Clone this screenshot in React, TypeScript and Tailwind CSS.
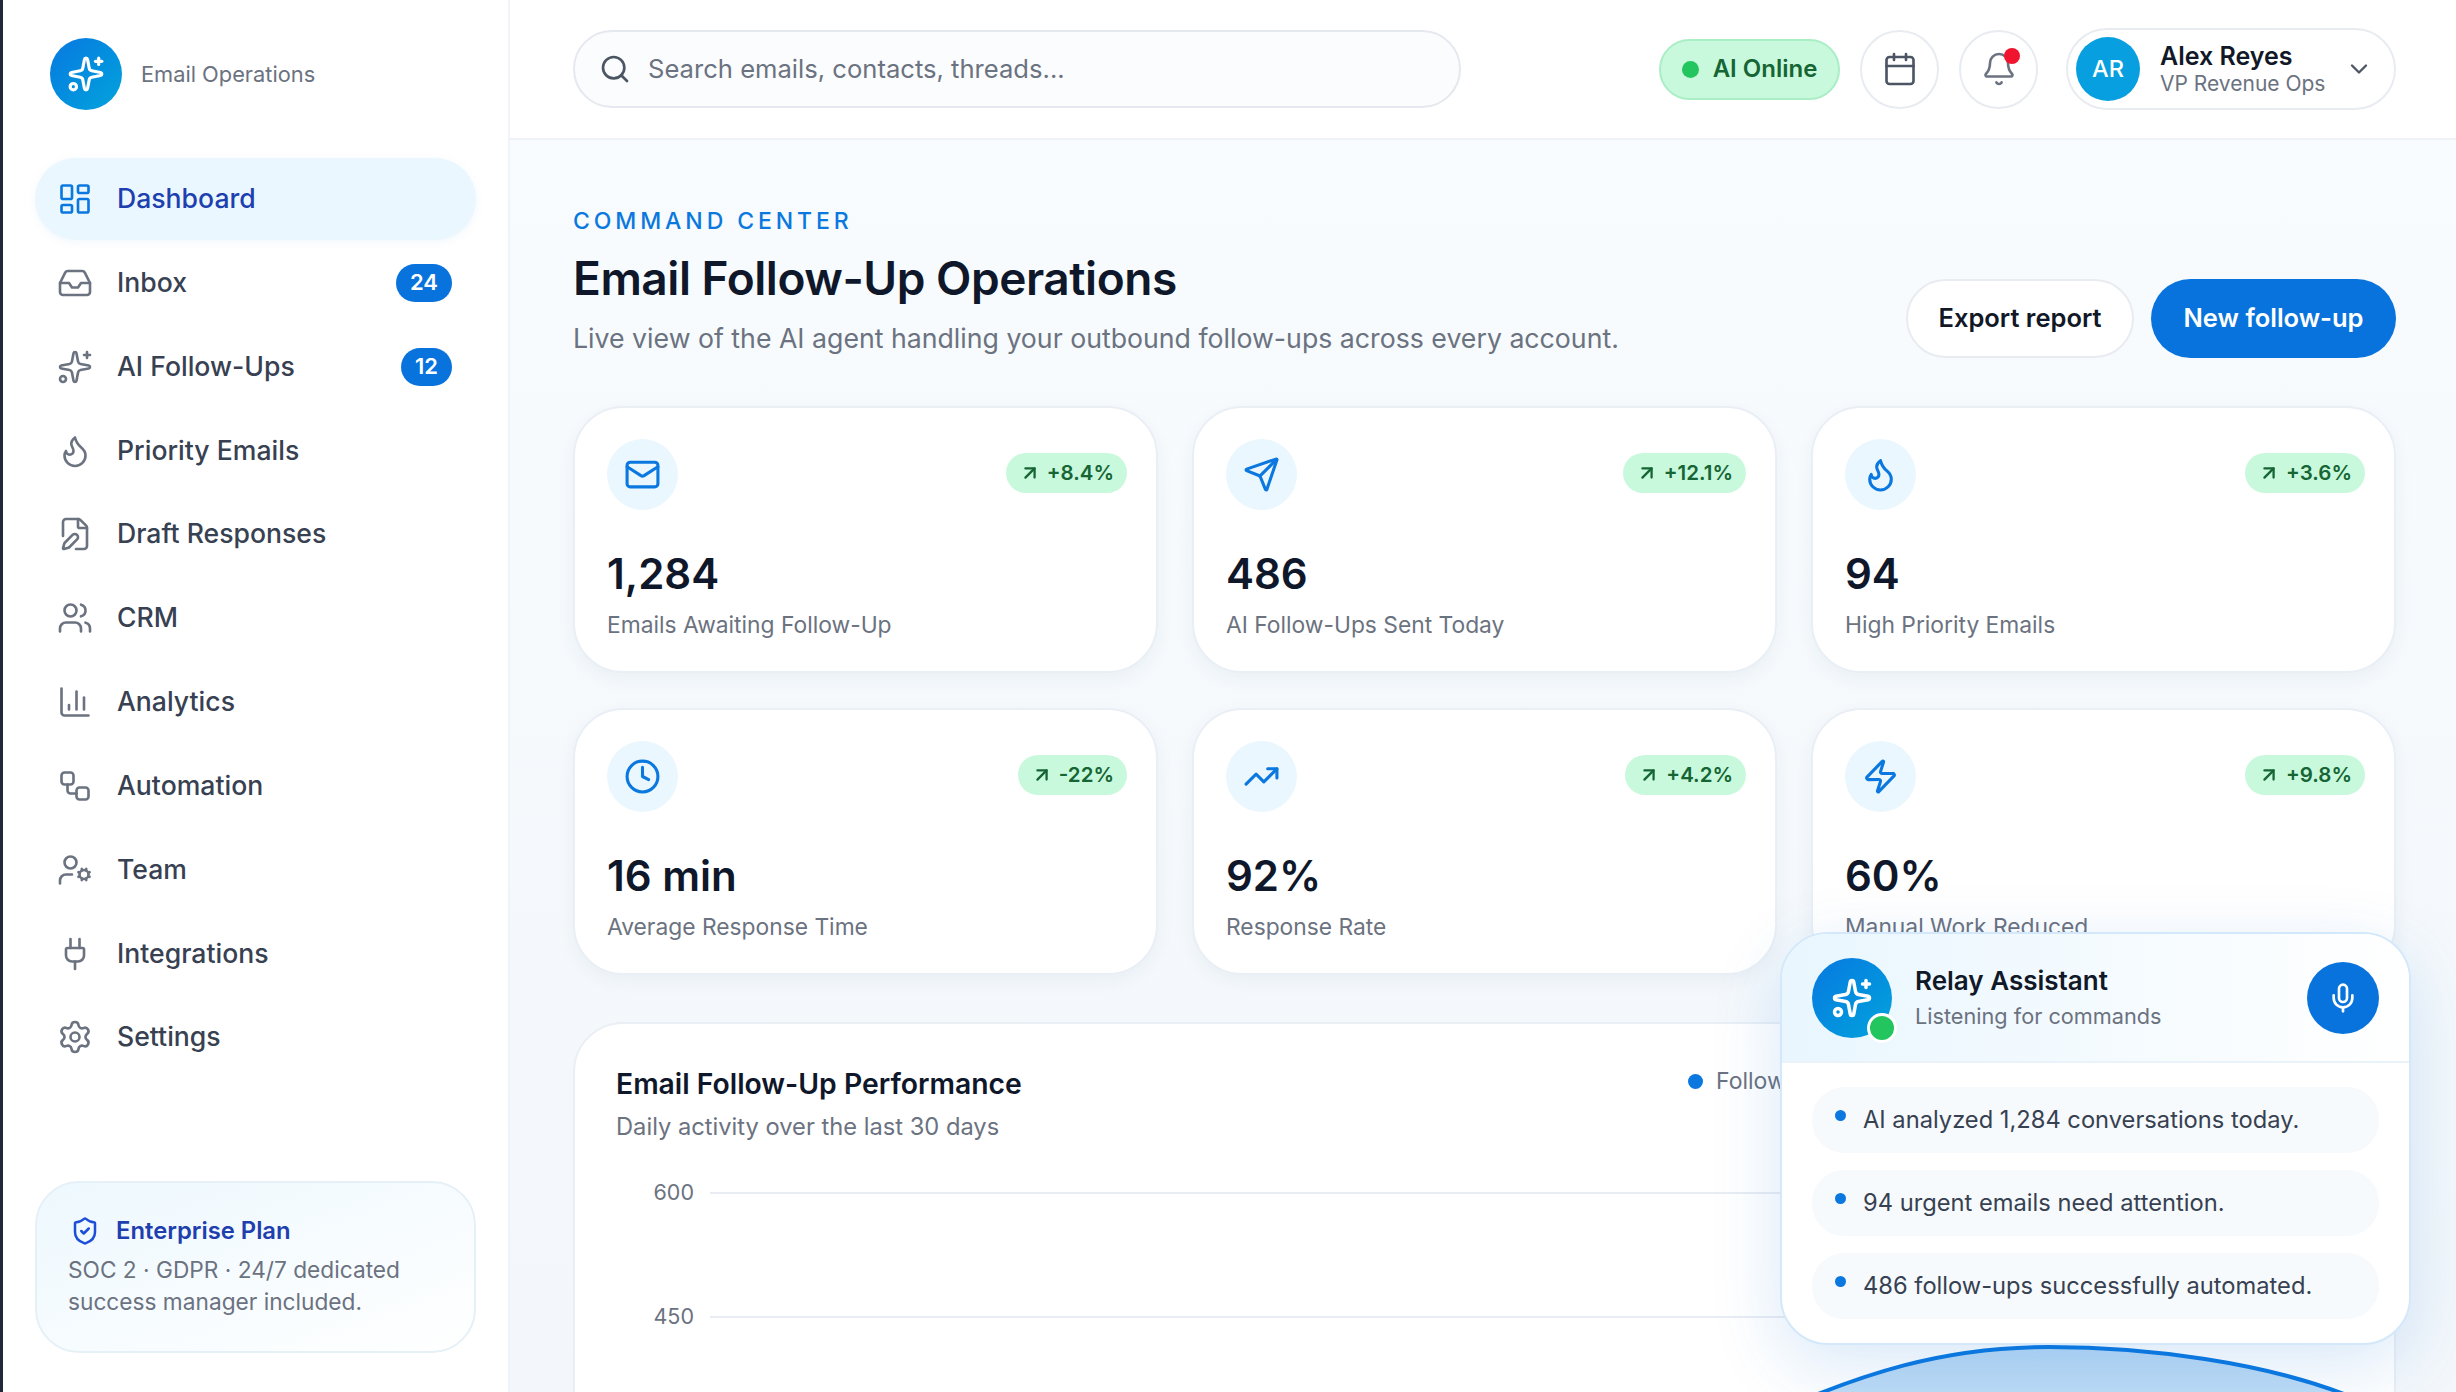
import {
  ArrowUpRight,
  Bell,
  Calendar,
  ChartColumn,
  ChevronDown,
  Clock,
  FilePen,
  Flame,
  Inbox,
  LayoutDashboard,
  Mail,
  Mic,
  Plug,
  Search,
  Send,
  Settings,
  ShieldCheck,
  Sparkles,
  TrendingUp,
  UserCog,
  Users,
  Workflow,
  Zap,
} from 'lucide-react'

const navItems = [
  { label: 'Dashboard', icon: LayoutDashboard, active: true },
  { label: 'Inbox', icon: Inbox, badge: '24' },
  { label: 'AI Follow-Ups', icon: Sparkles, badge: '12' },
  { label: 'Priority Emails', icon: Flame },
  { label: 'Draft Responses', icon: FilePen },
  { label: 'CRM', icon: Users },
  { label: 'Analytics', icon: ChartColumn },
  { label: 'Automation', icon: Workflow },
  { label: 'Team', icon: UserCog },
  { label: 'Integrations', icon: Plug },
  { label: 'Settings', icon: Settings },
]

const stats = [
  { value: '1,284', label: 'Emails Awaiting Follow-Up', delta: '+8.4%', icon: Mail },
  { value: '486', label: 'AI Follow-Ups Sent Today', delta: '+12.1%', icon: Send },
  { value: '94', label: 'High Priority Emails', delta: '+3.6%', icon: Flame },
  { value: '16 min', label: 'Average Response Time', delta: '-22%', icon: Clock },
  { value: '92%', label: 'Response Rate', delta: '+4.2%', icon: TrendingUp },
  { value: '60%', label: 'Manual Work Reduced', delta: '+9.8%', icon: Zap },
]

const assistantNotes = [
  'AI analyzed 1,284 conversations today.',
  '94 urgent emails need attention.',
  '486 follow-ups successfully automated.',
]

function Sidebar() {
  return (
    <aside className="flex w-[507px] shrink-0 flex-col border-r-2 border-[#f0f4f8] bg-white px-[32px]">
      <div className="mt-[38px] flex items-center gap-[19px] pl-[15px]">
        <div className="flex h-[72px] w-[72px] items-center justify-center rounded-full bg-gradient-to-br from-[#0b78e0] to-[#07a3dc] text-white">
          <Sparkles size={38} strokeWidth={2} />
        </div>
        <span className="text-[21.8px] text-[#6b7280]">Email Operations</span>
      </div>

      <nav className="mt-[48px] flex flex-col gap-[1.85px]">
        {navItems.map((item) => (
          <a
            key={item.label}
            className={
              item.active
                ? 'flex h-[82px] items-center rounded-full bg-[#eaf7fe] pl-[22px] pr-[24px] text-[#1e40af] shadow-[0_2px_10px_rgba(14,116,220,0.06)]'
                : 'flex h-[82px] items-center rounded-full pl-[22px] pr-[24px] text-[#374151]'
            }
          >
            <item.icon
              size={36}
              strokeWidth={1.75}
              className={item.active ? 'text-[#0b78e0]' : 'text-[#6b7280]'}
            />
            <span className="ml-[24px] text-[26.6px] font-medium">{item.label}</span>
            {item.badge && (
              <span className="ml-auto flex h-[38px] items-center rounded-full bg-[#0873dc] px-[14px] text-[22px] font-semibold text-white">
                {item.badge}
              </span>
            )}
          </a>
        ))}
      </nav>

      <div className="mb-[39px] mt-auto h-[172px] rounded-[44px] border-2 border-[#e6f0f7] bg-gradient-to-br from-[#edf8fe] to-white px-[31px] pt-[30px]">
        <div className="flex items-center gap-[16px] pl-[2px]">
          <ShieldCheck size={30} strokeWidth={2} className="text-[#1d4ed8]" />
          <span className="text-[23.8px] font-semibold text-[#1e40af]">Enterprise Plan</span>
        </div>
        <p className="mt-[5px] text-[22.7px] leading-[32px] text-[#6b7280]">
          SOC 2 · GDPR · 24/7 dedicated success manager included.
        </p>
      </div>
    </aside>
  )
}

function TopBar() {
  return (
    <header className="flex h-[140px] shrink-0 items-center justify-between border-b-2 border-[#eef2f6] bg-white pl-[63px] pr-[60px]">
      <div className="flex h-[78px] w-[888px] items-center gap-[17px] rounded-full border-2 border-[#e5e9ef] bg-[#fbfcfe] pl-[24px]">
        <Search size={32} strokeWidth={2} className="text-[#4b5563]" />
        <span className="text-[25.6px] text-[#6b7280]">Search emails, contacts, threads...</span>
      </div>
      <div className="flex items-center">
        <div className="flex h-[61px] w-[181px] items-center justify-center gap-[14px] rounded-full border-2 border-[#a9eec5] bg-[#c9f9dd]">
          <span className="h-[17px] w-[17px] rounded-full bg-[#22c55e]" />
          <span className="text-[24px] font-semibold text-[#166534]">AI Online</span>
        </div>
        <button className="ml-[20px] flex h-[79px] w-[79px] items-center justify-center rounded-full border-2 border-[#e8ecf1] bg-white text-[#4b5563]">
          <Calendar size={36} strokeWidth={1.75} />
        </button>
        <button className="relative ml-[20px] flex h-[79px] w-[79px] items-center justify-center rounded-full border-2 border-[#e8ecf1] bg-white text-[#6b7280]">
          <Bell size={36} strokeWidth={1.75} />
          <span className="absolute right-[16px] top-[16px] h-[16px] w-[16px] rounded-full bg-[#f0142f]" />
        </button>
        <div className="ml-[28px] flex h-[82px] w-[330px] items-center rounded-full border-2 border-[#e8ecf1] bg-white pl-[8px]">
          <div className="flex h-[64px] w-[64px] items-center justify-center rounded-full bg-[#079fdf] text-[23.5px] font-medium text-white">
            AR
          </div>
          <div className="ml-[20px] flex flex-col">
            <span className="text-[25px] font-semibold leading-[30px] text-[#111827]">Alex Reyes</span>
            <span className="text-[21px] leading-[26px] text-[#6b7280]">VP Revenue Ops</span>
          </div>
          <ChevronDown size={28} strokeWidth={2} className="ml-[20px] text-[#4b5563]" />
        </div>
      </div>
    </header>
  )
}

function StatCard({ stat }: { stat: (typeof stats)[number] }) {
  return (
    <div className="rounded-[50px] border-2 border-[#e9eff5] bg-white px-[32px] pb-[30px] pt-[31px] shadow-[0_6px_18px_rgba(15,50,90,0.05)]">
      <div className="flex items-start justify-between">
        <div className="flex h-[71px] w-[71px] items-center justify-center rounded-full bg-[#eaf7fe] text-[#0b78e0]">
          <stat.icon size={37} strokeWidth={2} />
        </div>
        <span className="mr-[-3px] mt-[14px] flex h-[40px] items-center gap-[6px] rounded-full bg-[#c9f9dd] px-[13px] text-[20.5px] font-semibold text-[#166534]">
          <ArrowUpRight size={22} strokeWidth={2.5} />
          {stat.delta}
        </span>
      </div>
      <div className="mt-[37px] text-[42px] font-semibold leading-[54px] text-[#0f172a]">{stat.value}</div>
      <div className="mt-[8px] text-[22.8px] leading-[32px] text-[#6b7280]">{stat.label}</div>
    </div>
  )
}

function PerformanceChart() {
  return (
    <section className="mt-[47px] h-[500px] rounded-[50px] border-2 border-[#e9eff5] bg-white px-[41px] pt-[40px]">
      <div className="relative">
        <h2 className="text-[28.3px] font-semibold leading-[40px] text-[#0f172a]">Email Follow-Up Performance</h2>
        <p className="mt-[7px] text-[23.7px] leading-[32px] text-[#6b7280]">Daily activity over the last 30 days</p>
        <div className="absolute left-[1072px] top-0 flex items-center gap-[13px] text-[23px] text-[#6b7280]">
          <span className="h-[15px] w-[15px] rounded-full bg-[#0b78e0]" />
          Follow-ups sent
        </div>
      </div>
      <svg width="1738" height="300" viewBox="0 0 1738 300" className="mt-[27px] block">
        <defs>
          <linearGradient id="curveFill" x1="0" y1="0" x2="0" y2="1">
            <stop offset="0" stopColor="#b9d9f4" />
            <stop offset="1" stopColor="#c8e1f7" />
          </linearGradient>
        </defs>
        <text x="78" y="30" textAnchor="end" fontSize="21.5" fill="#6b7280">600</text>
        <text x="78" y="154" textAnchor="end" fontSize="21.5" fill="#6b7280">450</text>
        <line x1="94" y1="23" x2="1738" y2="23" stroke="#e9edf3" strokeWidth="2" />
        <line x1="94" y1="147" x2="1738" y2="147" stroke="#e9edf3" strokeWidth="2" />
        <path
          d="M1100 270C1250 195 1340 177 1433 177C1530 177 1650 192 1738 228V300H1100Z"
          fill="url(#curveFill)"
        />
        <path
          d="M1100 270C1250 195 1340 177 1433 177C1530 177 1650 192 1738 228"
          fill="none"
          stroke="#0b78e0"
          strokeWidth="4"
        />
      </svg>
    </section>
  )
}

function AssistantPanel() {
  return (
    <div className="absolute right-[45px] top-[932px] w-[631px] overflow-hidden rounded-[48px] border-2 border-[#d3e8fa] bg-white shadow-[0_20px_70px_rgba(20,110,210,0.16)]">
      <div className="flex h-[129px] items-center border-b-2 border-[#eaf3fa] bg-gradient-to-r from-[#e9f6fe] to-white pl-[30px] pr-[30px]">
        <div className="relative flex h-[80px] w-[80px] items-center justify-center rounded-full bg-gradient-to-br from-[#0b78e0] to-[#07a3dc] text-white">
          <Sparkles size={42} strokeWidth={2} />
          <span className="absolute bottom-[-5px] right-[-5px] h-[30px] w-[30px] rounded-full border-[3px] border-white bg-[#22c55e]" />
        </div>
        <div className="ml-[23px] mt-[-2px] flex flex-col">
          <span className="text-[26px] font-semibold leading-[35px] text-[#111827]">Relay Assistant</span>
          <span className="mt-[3px] text-[21.7px] leading-[30px] text-[#6b7280]">Listening for commands</span>
        </div>
        <button className="ml-auto flex h-[72px] w-[72px] items-center justify-center rounded-full bg-[#0873dc] text-white">
          <Mic size={32} strokeWidth={2} />
        </button>
      </div>
      <ul className="flex flex-col gap-[17px] px-[30px] pb-[24px] pt-[24px]">
        {assistantNotes.map((note) => (
          <li key={note} className="flex h-[66px] items-center rounded-[32px] bg-[#f6fafd] pl-[23px]">
            <span className="mb-[10px] h-[11px] w-[11px] rounded-full bg-[#0b78e0]" />
            <span className="ml-[17px] text-[23.7px] text-[#374151]">{note}</span>
          </li>
        ))}
      </ul>
    </div>
  )
}

export default function App() {
  return (
    <div className="relative flex h-[1392px] overflow-hidden border-l-[3px] border-[#1f2937] bg-white font-[family-name:Inter,sans-serif]">
      <Sidebar />
      <div className="flex min-w-0 flex-1 flex-col bg-gradient-to-b from-[#f8fcfe] to-[#f3f7fb]">
        <TopBar />
        <main className="pl-[63px] pr-[60px] pt-[66px]">
          <div className="flex items-end justify-between">
            <div>
              <div className="text-[23px] font-medium leading-[30px] tracking-[0.17em] text-[#0b78e0]">COMMAND CENTER</div>
              <h1 className="mt-[12px] text-[46px] font-semibold leading-[60px] tracking-[-0.01em] text-[#0f172a]">
                Email Follow-Up Operations
              </h1>
              <p className="mt-[11px] text-[26.7px] leading-[38px] text-[#6b7280]">
                Live view of the AI agent handling your outbound follow-ups across every account.
              </p>
            </div>
            <div className="mb-[-1px] flex gap-[17px]">
              <button className="h-[79px] w-[228px] rounded-full border-2 border-[#e8ecf1] bg-white text-[25.5px] font-semibold text-[#111827]">
                Export report
              </button>
              <button className="h-[79px] w-[245px] rounded-full bg-[#0873dc] text-[25.5px] font-semibold text-white">
                New follow-up
              </button>
            </div>
          </div>

          <div className="mt-[49px] grid grid-cols-3 gap-x-[34px] gap-y-[35px]">
            {stats.map((stat) => (
              <StatCard key={stat.label} stat={stat} />
            ))}
          </div>

          <PerformanceChart />
        </main>
      </div>
      <AssistantPanel />
    </div>
  )
}
